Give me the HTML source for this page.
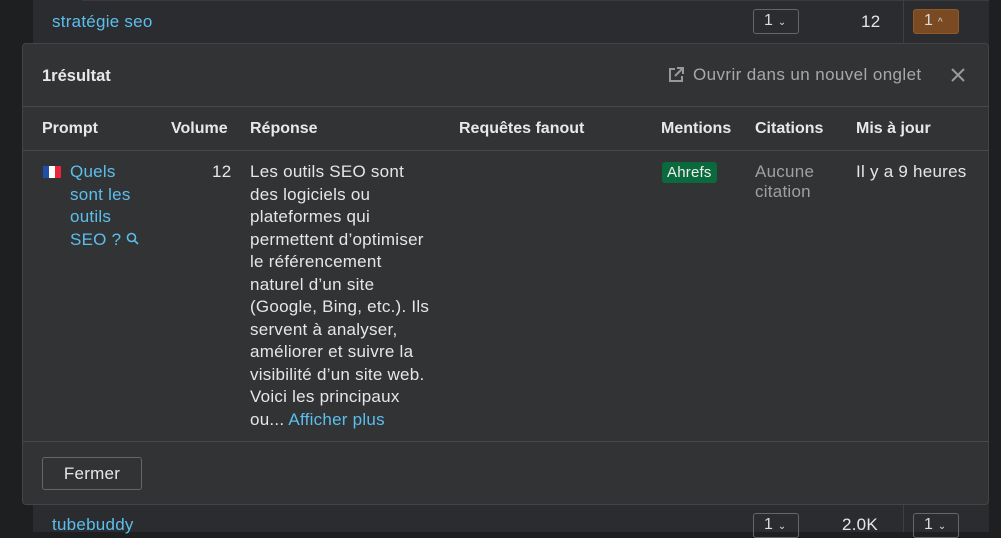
<!DOCTYPE html>
<html><head><meta charset="utf-8"><style>
*{box-sizing:border-box;margin:0;padding:0}
body{width:1001px;height:532px;background:#1e1f21;font-family:"Liberation Sans",sans-serif;color:#e6e6e6;position:relative;overflow:hidden;font-size:17px;letter-spacing:0.25px}
.tbl{position:absolute;left:33px;top:0;width:956px;height:532px;background:#2b2c2f}
.rowline{position:absolute;left:52px;width:937px;height:1px;background:#444}
.a{color:#5bbfee}
.sel{position:absolute;width:46px;height:25px;border:1px solid #666;border-radius:3px;font-size:16px;padding:2px 0 0 10px;color:#ddd}
.modal{position:absolute;left:22px;top:43px;width:967px;height:462px;background:#323335;border:1px solid #444;border-radius:4px}
.h{position:absolute;font-weight:bold;font-size:16px;color:#e8e8e8;letter-spacing:0}
.ln{position:absolute;left:0;width:100%;height:1px;background:#48494c}
.t{position:absolute;line-height:22.5px}
</style></head><body>
<div class="tbl"></div>
<div class="rowline" style="top:0;left:82px;width:907px;background:#3a3b3e"></div>
<div class="t a" style="left:52px;top:11px">stratégie seo</div>
<div class="sel" style="left:753px;top:9px">1 <span style="font-size:10px">⌄</span></div>
<div class="t" style="left:861px;top:11px">12</div>
<div style="position:absolute;left:903px;top:0;width:1px;height:43px;background:#3e3f42"></div>
<div class="sel" style="left:913px;top:9px;background:#7a4a22;border-color:#8d5a2c">1 <span style="font-size:10px">^</span></div>
<div class="modal">
 <div class="h" style="left:19px;top:23px;font-size:16.5px">1résultat</div>
 <svg style="position:absolute;left:644px;top:22px" width="18" height="18" viewBox="0 0 18 18" fill="none" stroke="#999" stroke-width="2"><path d="M8 3H3v12h12v-5M10 2h6v6M16 2L8 10"/></svg>
 <div class="t" style="left:670px;top:20px;color:#a8a8a8;font-size:17px;letter-spacing:0.4px">Ouvrir dans un nouvel onglet</div>
 <svg style="position:absolute;left:927px;top:23px" width="16" height="16" viewBox="0 0 16 16" stroke="#999" stroke-width="2"><path d="M2 2L14 14M14 2L2 14"/></svg>
 <div class="ln" style="top:62px"></div>
 <div class="h" style="left:19px;top:76px">Prompt</div>
 <div class="h" style="left:148px;top:76px">Volume</div>
 <div class="h" style="left:227px;top:76px">Réponse</div>
 <div class="h" style="left:436px;top:76px">Requêtes fanout</div>
 <div class="h" style="left:638px;top:76px">Mentions</div>
 <div class="h" style="left:732px;top:76px">Citations</div>
 <div class="h" style="left:833px;top:76px">Mis à jour</div>
 <div class="ln" style="top:106px"></div>
 <div style="position:absolute;left:20px;top:122px;width:18px;height:12px;display:flex"><i style="flex:1;background:#1f4fa8"></i><i style="flex:1;background:#fff"></i><i style="flex:1;background:#e8283a"></i></div>
 <div class="t a" style="left:47px;top:117px;width:80px">Quels<br>sont les<br>outils<br>SEO ? <svg width="13" height="13" viewBox="0 0 13 13" fill="none" stroke="#5bbfee" stroke-width="1.6"><circle cx="5.5" cy="5.5" r="4"/><path d="M8.5 8.5L12 12"/></svg></div>
 <div class="t" style="left:189px;top:117px">12</div>
 <div class="t" style="left:227px;top:117px;width:200px;white-space:nowrap">Les outils SEO sont<br>des logiciels ou<br>plateformes qui<br>permettent d’optimiser<br>le référencement<br>naturel d’un site<br>(Google, Bing, etc.). Ils<br>servent à analyser,<br>améliorer et suivre la<br>visibilité d’un site web.<br>Voici les principaux<br>ou... <span class="a">Afficher plus</span></div>
 <div style="position:absolute;left:639px;top:118px;background:#0b6a3d;color:#eee;font-size:15px;padding:1px 5px;border-radius:3px;line-height:19px;letter-spacing:0.2px">Ahrefs</div>
 <div class="t" style="left:732px;top:118px;color:#a0a0a0;line-height:20px">Aucune<br>citation</div>
 <div class="t" style="left:833px;top:117px">Il y a 9 heures</div>
 <div class="ln" style="top:397px"></div>
 <div style="position:absolute;left:19px;top:413px;width:100px;height:33px;border:1px solid #666;border-radius:3px;text-align:center;line-height:31px;font-size:17px">Fermer</div>
</div>
<div class="t a" style="left:52px;top:514px">tubebuddy</div>
<div class="sel" style="left:753px;top:513px">1 <span style="font-size:10px">⌄</span></div>
<div class="t" style="left:842px;top:514px">2.0K</div>
<div style="position:absolute;left:903px;top:505px;width:1px;height:27px;background:#3e3f42"></div>
<div class="sel" style="left:913px;top:513px">1 <span style="font-size:10px">⌄</span></div>
</body></html>
